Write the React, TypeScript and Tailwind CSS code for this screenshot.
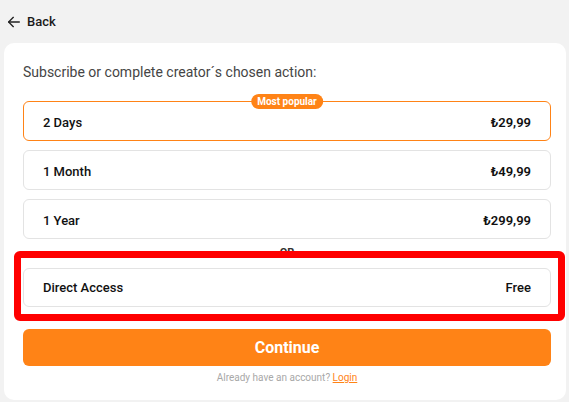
import React from "react";

type Plan = {
  label: string;
  price: string;
  popular?: boolean;
};

const plans: Plan[] = [
  { label: "2 Days", price: "₺29,99", popular: true },
  { label: "1 Month", price: "₺49,99" },
  { label: "1 Year", price: "₺299,99" },
];

function PlanRow({ plan }: { plan: Plan }) {
  return (
    <div
      className={
        "relative flex h-[40px] items-center justify-between rounded-[6px] border bg-white pl-[19px] pr-[19px] pt-[3px] text-[13px] font-medium text-[#111] " +
        (plan.popular ? "border-[#ff8316]" : "border-[#e3e3e3]")
      }
    >
      {plan.popular && (
        <span className="absolute left-1/2 top-[-8px] flex h-[15px] -translate-x-1/2 items-center rounded-full bg-[#ff8316] px-[6px] text-[10px] font-bold leading-none text-white">
          Most popular
        </span>
      )}
      <span>{plan.label}</span>
      <span className="font-semibold">{plan.price}</span>
    </div>
  );
}

export default function App() {
  return (
    <div className="min-h-[402px] w-[569px] bg-[#f2f2f2] pb-[3px] font-['Roboto',_'Liberation_Sans',_sans-serif]">
      <div className="flex h-[43px] items-center gap-[5px] pl-[6px] pt-[1px] text-[13px] font-medium text-[#1a1a1a]">
        <svg width="16" height="16" viewBox="0 0 24 24" fill="none" stroke="#222" strokeWidth="2" strokeLinecap="round" strokeLinejoin="round">
          <path d="M20 12H4" />
          <path d="M11 5l-7 7 7 7" />
        </svg>
        <span>Back</span>
      </div>

      <div className="relative ml-[4px] mr-[3px] rounded-[10px] bg-white pb-[15px] pl-[19px] pr-[15px] pt-[21px]">
        <p className="text-[14px] leading-[17px] text-[#454545]">
          Subscribe or complete creator´s chosen action:
        </p>

        <div className="mt-[20px] flex flex-col gap-[9px]">
          {plans.map((p) => (
            <PlanRow key={p.label} plan={p} />
          ))}
        </div>

        <div className="mt-[8px] h-[12px] text-center text-[11px] font-bold leading-[12px] text-[#333]">OR</div>

        <div className="mt-[9px] flex h-[39px] items-center justify-between rounded-[6px] border border-[#e3e3e3] bg-white px-[19px] pt-[1px] text-[13px] font-medium text-[#111]">
          <span>Direct Access</span>
          <span>Free</span>
        </div>

        <button className="mt-[22px] flex h-[37px] w-full items-center justify-center rounded-[6px] bg-[#ff8316] text-[16px] font-bold text-white">
          Continue
        </button>

        <p className="mt-[5px] text-center text-[10px] leading-[14px] text-[#a8a8a8]">
          Already have an account?{" "}
          <span className="text-[#ff8316] underline">Login</span>
        </p>

        <div className="pointer-events-none absolute left-[10px] top-[208px] h-[70px] w-[551px] rounded-[6px] border-[7px] border-[#ff0000]" />
      </div>
    </div>
  );
}
